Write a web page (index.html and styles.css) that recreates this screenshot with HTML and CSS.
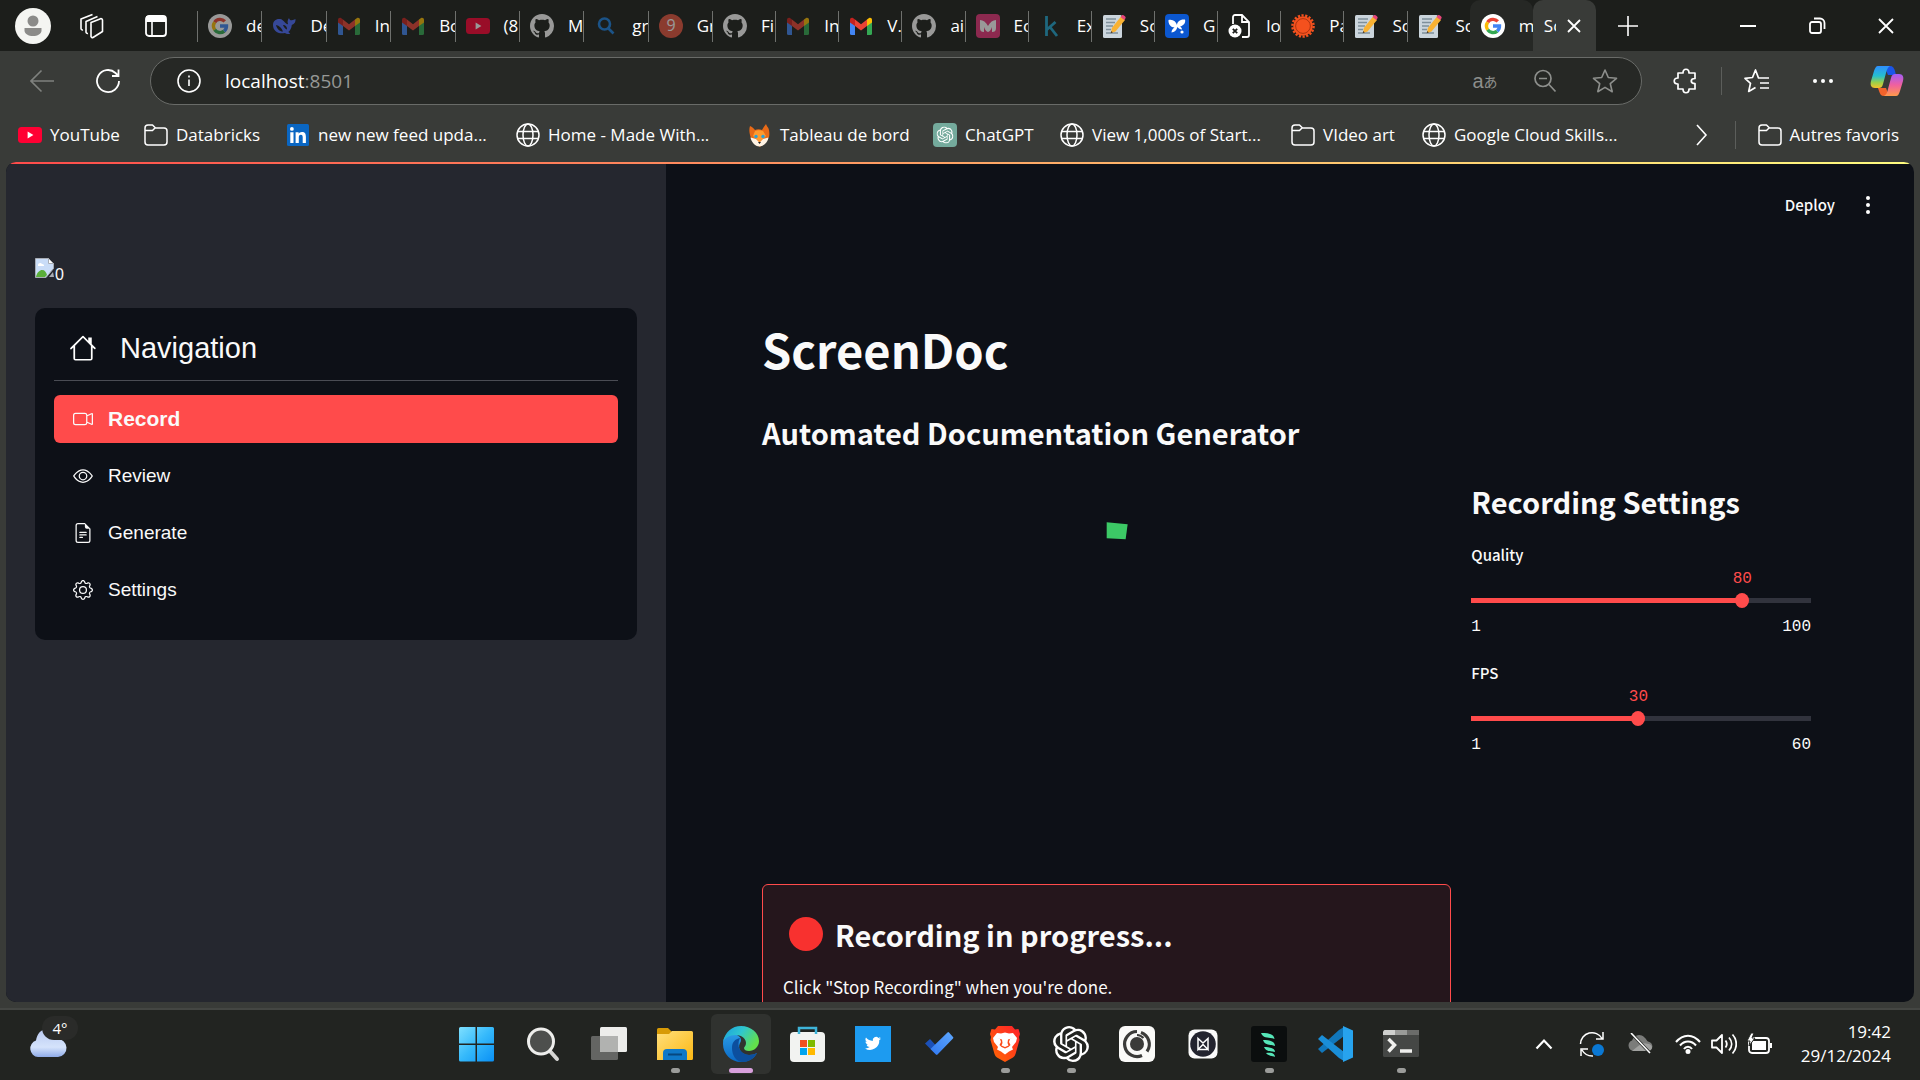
FILE: index.html
```html
<!DOCTYPE html>
<html lang="fr">
<head>
<meta charset="utf-8">
<title>ScreenDoc</title>
<link rel="stylesheet" href="styles.css">
</head>
<body>
<svg class="sprite" aria-hidden="true">
  <defs>
    <linearGradient id="gWin" x1="0" y1="0" x2="1" y2="1"><stop offset="0" stop-color="#7fe0ff"/><stop offset=".5" stop-color="#35b9fb"/><stop offset="1" stop-color="#0a90f5"/></linearGradient>
    <linearGradient id="gFolder" x1="0" y1="0" x2="1" y2="1"><stop offset="0" stop-color="#ffdf7c"/><stop offset="1" stop-color="#fcb813"/></linearGradient>
    <linearGradient id="gEdgeTop" x1="0" y1="0" x2="1" y2=".5"><stop offset="0" stop-color="#1a9fe0"/><stop offset=".5" stop-color="#2fc6cf"/><stop offset="1" stop-color="#63e04b"/></linearGradient>
    <linearGradient id="gEdge" x1="0" y1="0" x2="0" y2="1"><stop offset="0" stop-color="#2b9be6"/><stop offset="1" stop-color="#0a68c4"/></linearGradient>
    <linearGradient id="gCloud" x1="0" y1="0" x2="0" y2="1"><stop offset="0" stop-color="#b9c9f2"/><stop offset=".65" stop-color="#d5e3fb"/><stop offset="1" stop-color="#8fabe8"/></linearGradient>
    <linearGradient id="gBrave" x1="0" y1="1" x2="1" y2="0"><stop offset="0" stop-color="#ff6a00"/><stop offset="1" stop-color="#ff1f2b"/></linearGradient>
    <linearGradient id="gTick" x1="0" y1="1" x2="1" y2="0"><stop offset="0" stop-color="#3178f0"/><stop offset="1" stop-color="#5ea8ff"/></linearGradient>
    <linearGradient id="gCop1" x1="0" y1="0" x2="0" y2="1"><stop offset="0" stop-color="#2f8fff"/><stop offset=".45" stop-color="#25bfd0"/><stop offset=".75" stop-color="#9bd04a"/><stop offset="1" stop-color="#f5c22a"/></linearGradient>
    <linearGradient id="gCop2" x1="0" y1="0" x2="0" y2="1"><stop offset="0" stop-color="#a35cf5"/><stop offset=".5" stop-color="#f0609f"/><stop offset="1" stop-color="#ff9a4a"/></linearGradient>
  </defs>
  <symbol id="google" viewBox="0 0 24 24"><circle cx="12" cy="12" r="12" fill="#fff"/><g fill="none" stroke-width="3.4"><path d="M6.7 8.2A6.5 6.5 0 0 1 16.8 7.4" stroke="#ea4335"/><path d="M6.7 8.2a6.8 6.8 0 0 0 0 7.6" stroke="#fbbc05"/><path d="M6.7 15.8a6.5 6.5 0 0 0 9.5 1.3" stroke="#34a853"/><path d="M12 12h6.5a6.5 6.5 0 0 1-2.3 5.1" stroke="#4285f4"/></g></symbol>
  <symbol id="whale" viewBox="0 0 24 24"><path fill="#4d6bfe" d="M1 11c0-4 3-6.500 7-6 2 0 3.500 2 5 3.500 1.500 1.500 2.500 2 3 1.500-.8-2-.5-4 1-6 .4 1.800 1.500 2.500 2.800 2.300C21 6 22.500 5.500 23.500 5c.3 3-1 5-3.700 6-.3 3-1.500 5.500-3.500 7l2 1.600c-2 .9-4 .6-5.300-.6C6 20.500 1 17 1 11zm3 0c1 4 3.500 6.500 7 6.500C9.500 14 7.500 11.500 4 11zm7 0c1 2.500 2.500 4 4 4.500.3-2.500-1.500-4.500-4-4.500z"/></symbol>
  <symbol id="gmail" viewBox="0 0 24 24"><path fill="#4285f4" d="M1 7v12.500A1.500 1.500 0 0 0 2.500 21H6V10z"/><path fill="#34a853" d="M23 7v12.500a1.500 1.500 0 0 1-1.500 1.500H18V10z"/><path fill="#fbbc04" d="M18 5.500 20 4c1.300-.9 3 0 3 1.700V8.500L18 12z"/><path fill="#c5221f" d="M6 5.500 4 4C2.700 3.100 1 4 1 5.700v2.800L6 12z"/><path fill="#ea4335" d="m6 5.500 6 4.700 6-4.700V12l-6 4.600L6 12z"/></symbol>
  <symbol id="youtube" viewBox="0 0 24 24"><rect y="4" width="24" height="16" rx="3.500" fill="#ff0033"/><path d="m9.600 8.600 5.800 3.400-5.800 3.400z" fill="#fff"/></symbol>
  <symbol id="github" viewBox="0 0 16 16"><path fill="#fff" d="M8 0C3.580 0 0 3.580 0 8c0 3.540 2.290 6.530 5.470 7.590.4.070.55-.17.55-.38 0-.19-.01-.82-.01-1.490-2.010.37-2.530-.49-2.690-.94-.09-.23-.48-.94-.82-1.130-.28-.15-.68-.52-.01-.53.63-.01 1.080.58 1.230.82.72 1.210 1.870.87 2.330.66.070-.52.28-.87.51-1.070-1.780-.2-3.640-.89-3.640-3.950 0-.87.31-1.590.82-2.150-.08-.2-.36-1.020.08-2.120 0 0 .67-.21 2.200.82.64-.18 1.320-.27 2-.27s1.360.09 2 .27c1.530-1.040 2.200-.82 2.200-.82.44 1.100.16 1.920.08 2.120.51.56.82 1.270.82 2.150 0 3.070-1.870 3.750-3.650 3.950.29.25.54.73.54 1.480 0 1.070-.01 1.930-.01 2.200 0 .21.15.46.55.38A8.010 8.010 0 0 0 16 8c0-4.420-3.580-8-8-8z"/></symbol>
  <symbol id="loupe" viewBox="0 0 24 24"><g fill="none" stroke="#1b7fe0" stroke-width="2.600"><circle cx="10.500" cy="10" r="5.500"/><path d="m14.500 14.500 5 5"/></g></symbol>
  <symbol id="em" viewBox="0 0 24 24"><rect width="24" height="24" rx="4" fill="#e8337b"/><path fill="#fff" d="M4 6c3 0 6 2 8 6 2-4 5-6 8-6v8c0 3-1.500 4-4 4v-5c-1 3-2.500 4.500-4 5-1.500-.5-3-2-4-5v5c-2.500 0-4-1-4-4z"/></symbol>
  <symbol id="kay" viewBox="0 0 24 24"><path fill="none" stroke="#20a4cf" stroke-width="2.800" d="M7.500 2v20M16.500 8l-8.500 7.500M11 13l7 9"/></symbol>
  <symbol id="memo" viewBox="0 0 24 24"><rect x="1" y="1" width="19" height="23" rx="1.500" fill="#cbd5dc"/><path d="M4 5h10M4 8.500h9M4 12h7M4 15.500h5M4 19h12" stroke="#7f909b" stroke-width="1.400"/><path fill="#f9b233" d="m19 2.500 4 3.500-9.500 11.500L9 19l.8-5z"/><path fill="#e8457a" d="M20 1.200c1-1.200 4.500 1.500 3.500 3L22.300 6l-3.800-3z"/><path fill="#4a3b30" d="m9.300 17-.6 2.300 2.200-.8z"/></symbol>
  <symbol id="butterfly" viewBox="0 0 24 24"><rect width="24" height="24" rx="4" fill="#0b57d0"/><path fill="#fff" d="M12 11c0-3 3-6 8-5.500 1 3-1.500 6.500-5 7 1 .8 2 1.500 2 3-2 0-3.500-1-4.500-2.500-1 3-3 5.500-6 5.500 0-2 1-4 3-5C6 13.500 3 10 3.500 6 8 5 11 7.500 12 11z"/><circle cx="17" cy="18" r="1.600" fill="#fff"/></symbol>
  <symbol id="badfile" viewBox="0 0 24 24"><path fill="none" stroke="#fff" stroke-width="1.800" d="M5 10V3a2 2 0 0 1 2-2h7l7 7v13a2 2 0 0 1-2 2h-5M14 1v7h7"/><circle cx="7" cy="17" r="6.500" fill="#fff"/><path stroke="#1c1e1b" stroke-width="1.800" d="m4.800 14.800 4.400 4.400m0-4.400-4.400 4.400"/></symbol>
  <symbol id="sunburst" viewBox="0 0 24 24"><circle cx="12" cy="12" r="10.600" fill="none" stroke="#f4511e" stroke-width="2.400" stroke-dasharray="2.200 1.500"/><circle cx="12" cy="12" r="9.800" fill="#f4511e"/><circle cx="12" cy="12" r="7.400" fill="none" stroke="#9c2c0c" stroke-width=".8"/></symbol>
  <symbol id="folder" viewBox="0 0 24 24"><path fill="none" stroke="#fff" stroke-width="1.500" stroke-linejoin="round" d="M1 5a3 3 0 0 1 3-3h4.500l3 3H20a3 3 0 0 1 3 3v11a3 3 0 0 1-3 3H4a3 3 0 0 1-3-3zM1 7.500h7.500L11 5"/></symbol>
  <symbol id="linkedin" viewBox="0 0 24 24"><rect x="1" y="1" width="22" height="22" rx="1.500" fill="#0a66c2"/><path fill="#fff" d="M4.300 9.300h3.200V20H4.300zM5.900 4a1.900 1.900 0 1 1 0 3.800 1.900 1.900 0 0 1 0-3.800zM9.600 9.300h3v1.500c.6-1 1.700-1.800 3.300-1.800 3.200 0 4 2 4 4.900V20h-3.200v-5.500c0-1.400-.3-2.700-1.800-2.700-1.600 0-2.100 1.200-2.100 2.700V20H9.600z"/></symbol>
  <symbol id="globe" viewBox="0 0 24 24"><g fill="none" stroke="#fff" stroke-width="1.500"><circle cx="12" cy="12" r="11"/><ellipse cx="12" cy="12" rx="5" ry="11"/><path d="M2 8.500h20M2 15.500h20"/></g></symbol>
  <symbol id="fox" viewBox="0 0 24 24"><path fill="#e86a17" d="M2 3c2 1 4 2.500 5 4 2-1 5-1 7 0 1-2 2.500-4 4-6 .3 2 2.500 3 3 6 .5 3 .5 5 0 7l-9 10L3 15C1 10 1 6 2 3z"/><path fill="#ff9a2e" d="M7 8c2-1 6-1 8 0l3 5-6.500 6L5 13z"/><path fill="#fff3e4" d="M2.500 14.500 8 16l3.500 3.500L15 16l5.500-1.500c-.5 4-4.500 9-9 9s-8.500-5-9-9z"/><circle cx="8" cy="13.500" r="1.700" fill="#28a0d8"/><circle cx="15" cy="13.500" r="1.700" fill="#28a0d8"/><path d="M10 19h3l-1.500 2z" fill="#222"/></symbol>
  <symbol id="knot" viewBox="0 0 24 24"><path fill="currentColor" d="M22.280 9.820a5.980 5.980 0 0 0-.52-4.910 6.050 6.050 0 0 0-6.510-2.900A6.070 6.070 0 0 0 4.980 4.180a5.980 5.980 0 0 0-4 2.900 6.050 6.050 0 0 0 .74 7.100 5.980 5.980 0 0 0 .51 4.910 6.050 6.050 0 0 0 6.520 2.900A5.980 5.980 0 0 0 13.260 24a6.060 6.060 0 0 0 5.770-4.210 5.990 5.990 0 0 0 4-2.900 6.060 6.060 0 0 0-.75-7.070zm-9.020 12.610a4.480 4.480 0 0 1-2.880-1.040l.14-.08 4.780-2.760a.8.8 0 0 0 .39-.68v-6.740l2.020 1.170a.07.07 0 0 1 .04.050v5.580a4.500 4.500 0 0 1-4.490 4.500zM3.600 18.300a4.470 4.470 0 0 1-.54-3.010l.14.080 4.780 2.760a.77.77 0 0 0 .78 0l5.840-3.370v2.330a.08.08 0 0 1-.03.060L9.740 19.950a4.500 4.500 0 0 1-6.140-1.650zM2.340 7.900a4.490 4.490 0 0 1 2.370-1.970V11.600a.77.77 0 0 0 .39.680l5.810 3.350-2.020 1.170a.08.08 0 0 1-.07 0l-4.830-2.790A4.500 4.500 0 0 1 2.340 7.870zm16.600 3.860L13.100 8.360 15.120 7.200a.08.08 0 0 1 .07 0l4.830 2.790a4.490 4.490 0 0 1-.68 8.100v-5.680a.79.79 0 0 0-.4-.65zm2.010-3.030-.14-.08-4.780-2.780a.78.78 0 0 0-.78 0L9.410 9.230V6.900a.07.07 0 0 1 .03-.06l4.830-2.790a4.500 4.500 0 0 1 6.680 4.660zM8.310 12.860l-2.020-1.160a.08.08 0 0 1-.04-.06V6.070a4.500 4.500 0 0 1 7.380-3.450l-.14.080-4.780 2.760a.8.8 0 0 0-.4.680zm1.090-2.370 2.610-1.500 2.610 1.500v3l-2.600 1.500-2.610-1.500z"/></symbol>
</svg>

<header class="browser">
  <div class="tabstrip">
    <div class="strip-tools">
      <button class="icon-btn" aria-label="Profil"><svg width="36" height="36" viewBox="0 0 36 36"><circle cx="18" cy="18" r="18" fill="#f4f5f2"/><circle cx="18" cy="13" r="5.500" fill="#8b8b89"/><path fill="#8b8b89" d="M9.500 20h17v2.500c0 3.500-4 5.500-8.500 5.500s-8.500-2-8.500-5.500z"/></svg></button>
      <button class="icon-btn" aria-label="Espaces de travail"><svg width="26" height="26" viewBox="0 0 26 26" fill="none" stroke="#fff" stroke-width="1.600" stroke-linejoin="round"><path d="m12 9.500 9-3.500a1.500 1.500 0 0 1 2.500 1v11.500L14 24.500a1.500 1.500 0 0 1-2-1z"/><path d="M9 20.500a1.600 1.600 0 0 1-2-1.500V8.500L18.500 3.500"/><path d="M4 17a1.600 1.600 0 0 1-2-1.500V6L13.500 1.500"/></svg></button>
      <button class="icon-btn" aria-label="Onglets verticaux"><svg width="24" height="24" viewBox="0 0 24 24"><rect x="2" y="2" width="20" height="20" rx="3" fill="none" stroke="#fff" stroke-width="1.800"/><path fill="#fff" d="M2 2h20v6H2z"/><path stroke="#fff" stroke-width="1.600" d="M8 8v13"/></svg></button>
    </div>
    <div class="tabs">
      <a class="tab dim" href="#"><svg><use href="#google"/></svg><span>de</span></a>
      <a class="tab dim" href="#"><svg><use href="#whale"/></svg><span>De</span></a>
      <a class="tab dim" href="#"><svg><use href="#gmail"/></svg><span>In</span></a>
      <a class="tab dim" href="#"><svg><use href="#gmail"/></svg><span>Bo</span></a>
      <a class="tab dim" href="#"><svg><use href="#youtube"/></svg><span>(8</span></a>
      <a class="tab dim" href="#"><svg><use href="#github"/></svg><span>M</span></a>
      <a class="tab dim" href="#"><svg><use href="#loupe"/></svg><span>gr</span></a>
      <a class="tab dim" href="#"><svg viewBox="0 0 24 24"><circle cx="12" cy="12" r="12" fill="#e5533f"/><text x="12" y="17" text-anchor="middle" font-size="16" fill="#fff">9</text></svg><span>Gr</span></a>
      <a class="tab dim" href="#"><svg><use href="#github"/></svg><span>Fi</span></a>
      <a class="tab dim" href="#"><svg><use href="#gmail"/></svg><span>In</span></a>
      <a class="tab" href="#"><svg><use href="#gmail"/></svg><span>V.</span></a>
      <a class="tab dim" href="#"><svg><use href="#github"/></svg><span>ai</span></a>
      <a class="tab dim" href="#"><svg><use href="#em"/></svg><span>Ec</span></a>
      <a class="tab dim" href="#"><svg><use href="#kay"/></svg><span>Ex</span></a>
      <a class="tab" href="#"><svg><use href="#memo"/></svg><span>Sc</span></a>
      <a class="tab" href="#"><svg><use href="#butterfly"/></svg><span>G</span></a>
      <a class="tab" href="#"><svg><use href="#badfile"/></svg><span>lo</span></a>
      <a class="tab" href="#"><svg><use href="#sunburst"/></svg><span>Pa</span></a>
      <a class="tab" href="#"><svg><use href="#memo"/></svg><span>Sc</span></a>
      <a class="tab" href="#"><svg><use href="#memo"/></svg><span>Sc</span></a>
      <a class="tab hover" href="#"><svg><use href="#google"/></svg><span>m</span></a>
      <div class="tab active"><span>Sc</span><button class="icon-btn" aria-label="Fermer l'onglet"><svg viewBox="0 0 24 24" stroke="#fff" stroke-width="1.800"><path d="m6 6 12 12M18 6 6 18"/></svg></button></div>
    </div>
    <button class="icon-btn new-tab" aria-label="Nouvel onglet"><svg width="24" height="24" viewBox="0 0 24 24" stroke="#fff" stroke-width="1.600"><path d="M2 12h20M12 2v20"/></svg></button>
    <div class="window-controls">
      <button class="icon-btn" aria-label="Réduire"><svg width="18" height="18" viewBox="0 0 18 18" stroke="#fff" stroke-width="2"><path d="M1 9h16"/></svg></button>
      <button class="icon-btn" aria-label="Restaurer"><svg width="18" height="18" viewBox="0 0 18 18" fill="none" stroke="#fff" stroke-width="1.800"><rect x="2" y="5" width="11" height="11" rx="2"/><path d="M6 1.500h6a4.500 4.500 0 0 1 4.500 4.500v6"/></svg></button>
      <button class="icon-btn" aria-label="Fermer"><svg width="18" height="18" viewBox="0 0 18 18" stroke="#fff" stroke-width="1.800"><path d="m2 2 14 14M16 2 2 16"/></svg></button>
    </div>
  </div>

  <div class="toolbar">
    <button class="icon-btn nav-btn" aria-label="Précédent"><svg width="24" height="24" viewBox="0 0 24 24" fill="none" stroke="#7f817e" stroke-width="1.600"><path d="M24 12H1M11.500 1.500 1 12l10.500 10.500"/></svg></button>
    <button class="icon-btn nav-btn" aria-label="Actualiser"><svg width="26" height="26" viewBox="0 0 26 26" fill="none" stroke="#fff" stroke-width="1.800"><path d="M24 13a11 11 0 1 1-3.500-8L23 7.500M23.500 1.500v6.500H17"/></svg></button>
    <div class="address">
      <svg width="24" height="24" viewBox="0 0 24 24" fill="none" stroke="#fff" stroke-width="1.600"><circle cx="12" cy="12" r="11"/><path d="M12 10.500V17M12 6.500v2"/></svg>
      <a class="url" href="#"><b>localhost</b>:8501</a>
      <button class="icon-btn translate" aria-label="Traduire"><span>a</span><span class="kana">あ</span></button>
      <button class="icon-btn" aria-label="Zoom arrière"><svg width="24" height="24" viewBox="0 0 24 24" fill="none" stroke="#8d8f8c" stroke-width="1.700"><circle cx="10" cy="9.500" r="8"/><path d="m16 15.500 6.500 7M6 9.500h8"/></svg></button>
      <button class="icon-btn" aria-label="Ajouter aux favoris"><svg width="26" height="26" viewBox="0 0 26 26" fill="none" stroke="#8d8f8c" stroke-width="1.600" stroke-linejoin="round"><path d="m13 2 3.300 7.500 8.200.8-6.200 5.400 1.900 8L13 19.400l-7.200 4.300 1.900-8-6.200-5.400 8.200-.8z"/></svg></button>
    </div>
    <div class="toolbar-end">
      <button class="icon-btn" aria-label="Extensions"><svg width="26" height="26" viewBox="0 0 26 26" fill="none" stroke="#fff" stroke-width="1.700" stroke-linejoin="round"><path d="M5 5h5c0-5 6-5 6 0h6v5.500c-5 0-5 5 0 5V21h-6c0 5-6 5-6 0H5v-5c-5 0-5-6 0-6z"/></svg></button>
      <i class="rule"></i>
      <button class="icon-btn" aria-label="Favoris"><svg width="26" height="26" viewBox="0 0 26 26" fill="none" stroke="#fff" stroke-width="1.700" stroke-linejoin="round"><path d="M17 10h-2.500L11.500 2 8.500 9.500l-7.500.8 5.500 5-1.800 8.200 6.800-4M16 10h9M16 15h9M16 20h9"/></svg></button>
      <button class="icon-btn more" aria-label="Paramètres et plus"><svg width="22" height="22" viewBox="0 0 22 22" fill="#fff"><circle cx="3" cy="11" r="2"/><circle cx="11" cy="11" r="2"/><circle cx="19" cy="11" r="2"/></svg></button>
      <button class="icon-btn copilot" aria-label="Copilot"><svg width="34" height="32" viewBox="0 0 34 32"><path fill="#1b55e8" d="M14 1h6c3 0 4 2 5 5l1 4h-8z"/><path fill="url(#gCop1)" d="M8 1h12c-2 1-3 3-4 7l-3 11c-.8 3-2 4-4 4H5c-4 0-5-3-4-7L4 6c1-3 2-5 4-5z"/><path fill="#f2632b" d="M8 23h8l3 8h-5c-3 0-4-2-5-5z"/><path fill="url(#gCop2)" d="M26 31H14c2-1 3-3 4-7l3-11c.8-3 2-4 4-4h4c4 0 5 3 4 7l-3 10c-1 3-2 5-4 5z"/></svg></button>
    </div>
  </div>

  <nav class="bookmarks" aria-label="Favoris">
    <a class="bm" href="#"><svg><use href="#youtube"/></svg><span>YouTube</span></a>
    <a class="bm" href="#"><svg><use href="#folder"/></svg><span>Databricks</span></a>
    <a class="bm" href="#"><svg><use href="#linkedin"/></svg><span>new new feed upda...</span></a>
    <a class="bm" href="#"><svg><use href="#globe"/></svg><span>Home - Made With...</span></a>
    <a class="bm" href="#"><svg><use href="#fox"/></svg><span>Tableau de bord</span></a>
    <a class="bm" href="#"><svg class="gpt" viewBox="-5 -5 34 34"><use href="#knot" width="24" height="24"/></svg><span>ChatGPT</span></a>
    <a class="bm" href="#"><svg><use href="#globe"/></svg><span>View 1,000s of Start...</span></a>
    <a class="bm" href="#"><svg><use href="#folder"/></svg><span>VIdeo art</span></a>
    <a class="bm" href="#"><svg><use href="#globe"/></svg><span>Google Cloud Skills...</span></a>
    <div class="bm-end">
      <button class="icon-btn" aria-label="Plus de favoris"><svg width="24" height="24" viewBox="0 0 24 24" fill="none" stroke="#fff" stroke-width="1.600"><path d="m8 2 9 10-9 10"/></svg></button>
      <i class="rule"></i>
      <a class="bm" href="#"><svg><use href="#folder"/></svg><span>Autres favoris</span></a>
    </div>
  </nav>
</header>

<div class="viewport">
  <div class="page">
    <aside class="sidebar">
      <div class="logo">
        <svg width="20" height="20" viewBox="0 0 20 20" role="img" aria-label="0"><path fill="#c9dcf7" stroke="#a8adb5" d="M.5.500h13l5 5v5L11 19.500H.500z"/><path fill="#fff" stroke="#a8adb5" d="M13.500.500v5h5z"/><path fill="#5aae3a" d="M1 19c1-5 4-7 6-7 3 0 4 2 5 5l-2 2z"/><path fill="#fff" d="M3 7c0-2 3-3 4-1 2 0 2 1 2 2H3z"/><path fill="#a8adb5" d="m18 14 1 5h-5z"/></svg>
        <span>0</span>
      </div>
      <nav class="menu">
        <h2 class="menu-title"><svg width="28" height="28" viewBox="0 0 16 16" fill="#fff"><path d="M8.350 1.150a.5.500 0 0 0-.7 0L.850 7.900a.5.500 0 1 0 .7.700L2.500 7.700v6.300A1.200 1.200 0 0 0 3.700 15.200h8.600a1.200 1.200 0 0 0 1.200-1.200V7.700l.95.900a.5.500 0 0 0 .7-.7L13 5.750V2h-2v1.800zM12.500 6.700V14a.3.300 0 0 1-.3.300H3.800a.3.300 0 0 1-.3-.3V6.700L8 2.200z"/></svg><span>Navigation</span></h2>
        <ul>
          <li><a class="selected" href="#"><svg viewBox="0 0 16 16" fill="currentColor"><path fill-rule="evenodd" d="M0 5a2 2 0 0 1 2-2h7.500a2 2 0 0 1 1.980 1.730l3.110-1.380A1 1 0 0 1 16 4.270v7.460a1 1 0 0 1-1.410.91l-3.110-1.380A2 2 0 0 1 9.500 13H2a2 2 0 0 1-2-2zm11.500 5.180 3.500 1.550V4.270l-3.500 1.550zM2 4a1 1 0 0 0-1 1v6a1 1 0 0 0 1 1h7.500a1 1 0 0 0 1-1V5a1 1 0 0 0-1-1z"/></svg>Record</a></li>
          <li><a href="#"><svg viewBox="0 0 16 16" fill="currentColor"><path d="M16 8s-3-5.500-8-5.500S0 8 0 8s3 5.500 8 5.500S16 8 16 8M1.170 8a13 13 0 0 1 1.660-2.040C4.120 4.670 5.880 3.500 8 3.500s3.880 1.170 5.170 2.460A13 13 0 0 1 14.830 8a13 13 0 0 1-1.660 2.040C11.880 11.330 10.120 12.500 8 12.500s-3.880-1.170-5.170-2.460A13 13 0 0 1 1.170 8"/><path d="M8 5.500a2.500 2.500 0 1 0 0 5 2.500 2.500 0 0 0 0-5M4.500 8a3.500 3.500 0 1 1 7 0 3.500 3.500 0 0 1-7 0"/></svg>Review</a></li>
          <li><a href="#"><svg viewBox="0 0 16 16" fill="currentColor"><path d="M5.500 7a.5.500 0 0 0 0 1h5a.5.500 0 0 0 0-1zM5 9.500a.5.500 0 0 1 .5-.5h5a.5.500 0 0 1 0 1h-5a.5.500 0 0 1-.5-.5m0 2a.5.500 0 0 1 .5-.5h2a.5.500 0 0 1 0 1h-2a.5.500 0 0 1-.5-.5"/><path d="M9.500 0H4a2 2 0 0 0-2 2v12a2 2 0 0 0 2 2h8a2 2 0 0 0 2-2V4.500zm0 1v2A1.500 1.500 0 0 0 11 4.500h2V14a1 1 0 0 1-1 1H4a1 1 0 0 1-1-1V2a1 1 0 0 1 1-1z"/></svg>Generate</a></li>
          <li><a href="#"><svg viewBox="0 0 16 16" fill="currentColor"><path d="M8 4.754a3.246 3.246 0 1 0 0 6.492 3.246 3.246 0 0 0 0-6.492M5.754 8a2.246 2.246 0 1 1 4.492 0 2.246 2.246 0 0 1-4.492 0"/><path d="M9.796 1.343c-.527-1.790-3.065-1.790-3.592 0l-.094.319a.873.873 0 0 1-1.255.52l-.292-.16c-1.640-.892-3.433.902-2.540 2.541l.159.292a.873.873 0 0 1-.52 1.255l-.319.094c-1.790.527-1.790 3.065 0 3.592l.319.094a.873.873 0 0 1 .52 1.255l-.16.292c-.892 1.640.901 3.434 2.541 2.540l.292-.159a.873.873 0 0 1 1.255.52l.094.319c.527 1.790 3.065 1.790 3.592 0l.094-.319a.873.873 0 0 1 1.255-.52l.292.16c1.640.893 3.434-.902 2.540-2.541l-.159-.292a.873.873 0 0 1 .52-1.255l.319-.094c1.790-.527 1.790-3.065 0-3.592l-.319-.094a.873.873 0 0 1-.52-1.255l.16-.292c.893-1.640-.902-3.433-2.541-2.540l-.292.159a.873.873 0 0 1-1.255-.52zm-2.633.283c.246-.835 1.428-.835 1.674 0l.094.319a1.873 1.873 0 0 0 2.693 1.115l.291-.16c.764-.415 1.600.42 1.184 1.185l-.159.292a1.873 1.873 0 0 0 1.116 2.692l.318.094c.835.246.835 1.428 0 1.674l-.319.094a1.873 1.873 0 0 0-1.115 2.693l.16.291c.415.764-.42 1.600-1.185 1.184l-.291-.159a1.873 1.873 0 0 0-2.693 1.116l-.094.318c-.246.835-1.428.835-1.674 0l-.094-.319a1.873 1.873 0 0 0-2.692-1.115l-.292.16c-.764.415-1.600-.42-1.184-1.185l.159-.291A1.873 1.873 0 0 0 1.945 8.930l-.319-.094c-.835-.246-.835-1.428 0-1.674l.319-.094A1.873 1.873 0 0 0 3.060 4.377l-.16-.292c-.415-.764.42-1.600 1.185-1.184l.292.159a1.873 1.873 0 0 0 2.692-1.115z"/></svg>Settings</a></li>
        </ul>
      </nav>
    </aside>

    <main class="main">
      <div class="app-bar">
        <button class="deploy">Deploy</button>
        <button class="icon-btn" aria-label="Menu"><svg width="20" height="20" viewBox="0 0 20 20" fill="#fff"><circle cx="10" cy="3" r="2"/><circle cx="10" cy="10" r="2"/><circle cx="10" cy="17" r="2"/></svg></button>
      </div>
      <div class="content">
        <h1>ScreenDoc</h1>
        <h3 class="subtitle">Automated Documentation Generator</h3>
        <div class="columns">
          <section class="stage">
            <svg class="animation" viewBox="0 0 690 404" aria-hidden="true"><path fill="#3cc966" d="m345 42 21 2-2 15-19-1z"/></svg>
            <div class="notice">
              <h3><i class="dot"></i>Recording in progress...</h3>
              <p>Click "Stop Recording" when you're done.</p>
            </div>
          </section>
          <section class="settings">
            <h3>Recording Settings</h3>
            <div class="slider" style="--pos: 79.8%">
              <label for="quality">Quality</label>
              <div class="value-row"><output for="quality">80</output></div>
              <input id="quality" type="range" min="1" max="100" value="80">
              <div class="bounds"><span>1</span><span>100</span></div>
            </div>
            <div class="slider" style="--pos: 49.2%">
              <label for="fps">FPS</label>
              <div class="value-row"><output for="fps">30</output></div>
              <input id="fps" type="range" min="1" max="60" value="30">
              <div class="bounds"><span>1</span><span>60</span></div>
            </div>
          </section>
        </div>
      </div>
    </main>
  </div>
</div>

<footer class="taskbar">
  <div class="weather">
    <svg width="38" height="30" viewBox="0 0 38 30"><path fill="url(#gCloud)" d="M9 29a8.500 8.500 0 0 1-2-16.500C8 6 12 1 18 1c5 0 9 4 10 10a9 9 0 0 1 1 18z"/></svg>
    <span class="temp">4°</span>
  </div>
  <div class="apps">
    <button class="app" aria-label="Démarrer"><svg viewBox="0 0 36 36" fill="url(#gWin)"><path d="M0 2.500A1.500 1.500 0 0 1 1.500 1H16.500v16.500H0zM18 1H33.500a1.500 1.500 0 0 1 1.500 1.500v15H18zM0 19h16.500v16.500H1.500A1.500 1.500 0 0 1 0 34zM18 19h17v15a1.500 1.500 0 0 1-1.500 1.500H18z"/></svg></button>
    <button class="app" aria-label="Rechercher"><svg viewBox="0 0 36 36"><path stroke="#d6d6d4" stroke-width="4" stroke-linecap="round" d="m24 24 8 9"/><circle cx="16" cy="15.500" r="12.500" fill="#4d4f4d" stroke="#eeeeec" stroke-width="3"/></svg></button>
    <button class="app" aria-label="Vue des tâches"><svg viewBox="0 0 36 36"><rect x="0" y="10" width="27" height="24" rx="1.500" fill="#646563"/><rect x="9" y="1" width="27" height="25" rx="1.500" fill="#ededeb"/><path fill="#b1b2b0" d="M9 10h18v16H10.500A1.500 1.500 0 0 1 9 24.500z"/></svg></button>
    <button class="app running" aria-label="Explorateur de fichiers"><svg viewBox="0 0 36 36"><path fill="#d79a06" d="M0 3.500A1.500 1.500 0 0 1 1.500 2H11l4 4-3 5H0z"/><path fill="url(#gFolder)" d="M0 8h12l3-3h19.500A1.500 1.500 0 0 1 36 6.500v26a1.500 1.500 0 0 1-1.500 1.500H0z"/><path fill="#0f78c8" d="M6 34V27a4 4 0 0 1 4-4h16a4 4 0 0 1 4 4v7z"/><path stroke="#07477f" stroke-width="2" d="M11 28.500h14"/></svg></button>
    <button class="app current" aria-label="Microsoft Edge"><svg viewBox="0 0 36 36"><path fill="url(#gEdge)" d="M0 18C0 8 8 6 14 9c4 2 5 5 3 8-3 6 2 12 9 12 3 0 6-1 8-2-3 6-9 9-16 9C8 36 0 28 0 18z"/><path fill="#0c4f9e" d="M9 22c0-6 3-9 8-10-4 8 0 16 9 17 3 0 6-1 8-2-3 6-9 9-14 9C13 36 9 29 9 22z"/><path fill="url(#gEdgeTop)" d="M0 16C2 6 9 0 18 0c10 0 18 7 18 15 0 6-5 10-10 10-3 0-5-1-5-3 0-1 2-2 2-5 0-4-4-8-10-8-7 0-11 3-13 7z"/></svg></button>
    <button class="app" aria-label="Microsoft Store"><svg viewBox="0 0 36 36"><rect x="1" y="6" width="35" height="30" rx="4" fill="#f2f3f1"/><path fill="none" stroke="#3eb4d9" stroke-width="2.500" d="M10 8V2h17v6"/><path fill="#f25022" d="M11 14h7v7h-7z"/><path fill="#7fba00" d="M19 14h7v7h-7z"/><path fill="#00a4ef" d="M11 22h7v7h-7z"/><path fill="#ffb900" d="M19 22h7v7h-7z"/></svg></button>
    <button class="app" aria-label="Twitter"><svg viewBox="0 0 36 36"><path fill="#1d9bf0" d="M0 0h36v36H0z"/><path fill="#fff" d="M26 12.400a6.500 6.500 0 0 1-1.900.5c.7-.4 1.200-1 1.400-1.800-.6.400-1.300.6-2.100.8a3.300 3.300 0 0 0-5.600 3A9.300 9.300 0 0 1 11 11.500a3.300 3.300 0 0 0 1 4.400c-.5 0-1-.2-1.500-.4 0 1.600 1.100 2.900 2.600 3.200-.5.100-1 .1-1.500 0 .4 1.300 1.600 2.300 3.100 2.300A6.600 6.600 0 0 1 10 22.400a9.300 9.300 0 0 0 14.300-8.300c.7-.5 1.200-1 1.700-1.700z"/></svg></button>
    <button class="app" aria-label="To Do"><svg viewBox="0 0 36 36"><path fill="#1b50b8" d="m4 17.500 5-4.500 6 6.500v9z"/><path fill="url(#gTick)" d="M9.500 23 26.500 6.500a1 1 0 0 1 1.500 0l4 4.500a1 1 0 0 1 0 1.500L16.500 28.500a1 1 0 0 1-1.500 0z"/></svg></button>
    <button class="app running" aria-label="Brave"><svg viewBox="0 0 36 36"><path fill="url(#gBrave)" d="M11 0h14l3 3.500 3.500-.5 1.500 5-1 3 .5 3-4 14a6 6 0 0 1-2.500 3.500L18 36l-8-4.500A6 6 0 0 1 7.500 28l-4-14 .5-3-1-3L4.500 3 8 3.500z"/><path fill="#fff" d="m10 7 4 .5 4-1 4 1 4-.5 4 5-1 4-4 5 1 2.500-4 2-4 3-4-3-4-2L11 21l-4-5-1-4z"/><path fill="#fb4a19" d="m10 12 5 1.500.5 3.500-1 2.500L18 21l3.500-1.500-1-2.500.5-3.500 5-1.500-3 1-1 3 1.500 3-2 2-3.500 1.500-3.500-1.500-2-2 1.500-3-1-3z"/></svg></button>
    <button class="app running" aria-label="ChatGPT"><svg class="white" viewBox="0 0 24 24"><use href="#knot"/></svg></button>
    <button class="app" aria-label="Enregistreur"><svg viewBox="0 0 36 36"><rect width="36" height="36" rx="6" fill="#fafaf8"/><g fill="none" stroke="#3b3b39" stroke-width="3.200"><path d="M23 29.500A12.500 12.500 0 1 1 18 5.500"/><path d="M22 6.500a12.500 12.500 0 0 1 6 19"/><path d="M18 9a9 9 0 0 1 6.500 3" stroke-width="2"/></g><circle cx="18" cy="18" r="7" fill="#3b3b39"/></svg></button>
    <button class="app" aria-label="Monica"><svg viewBox="0 0 36 36"><rect x="3.500" y="3.500" width="29" height="29" rx="6" fill="#fbfbfb"/><circle cx="18" cy="18" r="12.800" fill="#23242f"/><path fill="none" stroke="#fff" stroke-width="1.500" d="M13 23.500v-11l5 4.500 5-4.500v11l-5-5z M13 23.500h10"/></svg></button>
    <button class="app running" aria-label="Windsurf"><svg viewBox="0 0 36 36"><rect width="36" height="36" rx="3" fill="#0b0e0e"/><path fill="#56e6b8" d="M10 7c8 0 13 1 13.500 6C19 11 12 13 10 7zM12 14c6 0 12 1 12 6-5-2-10 0-12-6zM13 21c5 0 11 1 11 5-4-1-9 0-11-5zM15 27c5-1 9 0 9 4-2-1-7-1-9-4z"/></svg></button>
    <button class="app" aria-label="Visual Studio Code"><svg viewBox="0 0 36 36"><path fill="#1177bb" d="M1 23 22 4l5-3v9L5 27z"/><path fill="#1a8ed8" d="m1 13 4-4 22 17v9l-5-3z"/><path fill="#27a3ee" d="m26 0 10 4.500v27L26 36z"/></svg></button>
    <button class="app running" aria-label="Terminal"><svg viewBox="0 0 36 36"><rect y="4" width="36" height="27" rx="1.500" fill="#454745"/><path fill="#cfd0ce" d="M1.500 4H12v5H0V5.500z"/><path fill="#9a9b99" d="M12 4h12v5H12z"/><path fill="#6b6c6a" d="M24 4h12v5H24z"/><path fill="none" stroke="#f0f0ee" stroke-width="3.500" d="m5.500 13 6 6-6 6.500"/><path stroke="#f0f0ee" stroke-width="3.500" d="M17 25h12"/></svg></button>
  </div>
  <div class="tray">
    <button class="icon-btn chev" aria-label="Icônes masquées"><svg width="18" height="12" viewBox="0 0 18 12" fill="none" stroke="#fff" stroke-width="2.200"><path d="m1.500 10.500 7.500-8 7.500 8"/></svg></button>
    <svg width="26" height="26" viewBox="0 0 26 26" fill="none" stroke="#fff" stroke-width="1.500"><path d="M1.500 13A11.500 11.500 0 0 1 23 7.500M24 1v7h-7M14 25A12 12 0 0 1 3 19M2 25v-7h7"/><circle cx="19" cy="19" r="6" fill="#0a78d4" stroke="none"/></svg>
    <svg width="26" height="22" viewBox="0 0 26 22"><path fill="#7b7c7a" d="M6 18a5.500 5.500 0 0 1-1-10.500C7 2 13 0 17.500 4.500 20 7 20 8 21 8.500c6 1 6 9.500-1 9.500z"/><path fill="#a0a19f" d="M5 18 15 10l7 1c5 2 3 7-1 7z"/><path stroke="#222421" stroke-width="3" d="m4 0 19 20"/><path stroke="#fff" stroke-width="1.600" d="m4 0 19 20"/></svg>
    <div class="status">
      <svg width="26" height="22" viewBox="0 0 26 22" fill="none" stroke="#fff" stroke-width="2"><path d="M1 9c7-8.500 17-8.500 24 0M5 12.500c4.500-5.500 11.500-5.500 16 0M9 16c2-3 6-3 8 0"/><circle cx="13" cy="18.500" r="1.500" fill="#fff"/></svg>
      <svg width="26" height="22" viewBox="0 0 26 22" fill="none" stroke="#fff" stroke-width="1.800" stroke-linejoin="round"><path d="M1 7.500h4.500L11 2v18l-5.500-5.500H1zM14.500 7.500c1.500 2 1.500 5 0 7M18 4.500c3.500 4 3.500 9 0 13M21.500 1.500c5 5.500 5 13.500 0 19"/></svg>
      <svg width="26" height="22" viewBox="0 0 26 22"><rect x="2" y="5" width="20" height="15" rx="3" fill="none" stroke="#fff" stroke-width="1.800"/><rect x="5" y="8" width="14" height="9" fill="#fff"/><path fill="#fff" d="M23 10h2v5h-2z"/><path fill="#fff" stroke="#222421" d="M4 0 0 8h3l-1 5 6-8H5l2-5z"/></svg>
    </div>
    <div class="clock"><time>19:42</time><time>29/12/2024</time></div>
  </div>
</footer>
</body>
</html>
```
FILE: styles.css
```css
* { box-sizing: border-box; }

body {
  margin: 0;
  height: 100vh;
  display: flex;
  flex-direction: column;
  overflow: hidden;
  background: #393b38;
  color: #fff;
  font: 17px/24px "Open Sans", "Noto Sans", sans-serif;
}

h1, h2, h3, p, ul { margin: 0; padding: 0; }
ul { list-style: none; }
a { color: inherit; text-decoration: none; }
svg { display: block; flex: none; }
.sprite { position: absolute; width: 0; height: 0; }

.icon-btn {
  display: flex;
  align-items: center;
  justify-content: center;
  padding: 0;
  border: 0;
  background: none;
  color: inherit;
}

.rule { width: 1px; height: 28px; background: #5c5e5b; }

/* Tab strip */
.tabstrip {
  display: flex;
  height: 51px;
  background: #1c1e1b;
}
.strip-tools {
  display: flex;
  align-items: center;
  gap: 28px;
  width: 197px;
  padding-left: 15px;
}
.strip-tools .icon-btn:last-child { margin-left: 11px; }
.tabs {
  display: flex;
  flex: 0 1 1399px;
  min-width: 0;
}
.tab {
  display: flex;
  align-items: center;
  flex: 42 1 0;
  min-width: 0;
  gap: 14px;
  padding-left: 10px;
  overflow: hidden;
  white-space: nowrap;
  border-left: 1px solid transparent;
  border-image: linear-gradient(transparent 12px, #6e706d 12px, #6e706d 41px, transparent 41px) 1;
}
.tab:nth-child(-n+8) { flex-grow: 43; }
.tab svg { width: 24px; height: 24px; }
.tab.dim svg { opacity: .55; }
.tab.hover { background: #262825; border-image: none; border-radius: 10px 10px 0 0; }
.tab.active { background: #393b38; border-image: none; border-radius: 10px 10px 0 0; gap: 6px; }
.tab.active span { width: 12px; overflow: hidden; }
.new-tab { width: 64px; }
.window-controls {
  display: flex;
  margin-left: auto;
}
.window-controls .icon-btn { width: 69px; }

/* Toolbar */
.toolbar {
  display: flex;
  align-items: center;
  height: 60px;
  padding-left: 9px;
}
.nav-btn { width: 66px; height: 48px; }
.nav-btn + .address { margin-left: 9px; }
.address {
  display: flex;
  align-items: center;
  flex: 1;
  gap: 24px;
  height: 48px;
  padding: 0 18px 0 26px;
  border: 1px solid #696b68;
  border-radius: 24px;
  background: #262825;
}
.url { flex: 1; color: #969895; font-size: 19px; }
.url b { color: #fff; font-weight: 400; }
.address .icon-btn { width: 36px; }
.translate { color: #8d8f8c; font-size: 20px; }
.kana { font: 14px/24px "Noto Sans CJK JP", sans-serif; }
.toolbar-end {
  display: flex;
  align-items: center;
  gap: 22px;
  width: 278px;
  padding: 0 16px 0 31px;
}
.more { margin-left: 20px; }
.copilot { margin-left: auto; }

/* Bookmarks */
.bookmarks {
  display: grid;
  grid-template-columns: 126px 142px 230px 232px 185px 127px 231px 131px auto 1fr;
  align-items: center;
  height: 51px;
  padding: 0 21px 4px 18px;
  white-space: nowrap;
}
.bm { display: flex; align-items: center; gap: 8px; }
.bm svg { width: 24px; height: 24px; }
.bm .gpt { border-radius: 4px; background: #74aa9c; color: #fff; }
.bm-end {
  display: flex;
  align-items: center;
  justify-content: flex-end;
  gap: 22px;
}

/* Web page */
.viewport {
  display: flex;
  flex: 1 1 0;
  min-height: 0;
  padding: 0 6px 6px;
}
.page {
  position: relative;
  display: flex;
  flex: 1;
  min-width: 0;
  overflow: hidden;
  border-radius: 10px;
  background: #0d1017;
  color: #fafafa;
  font-family: "Noto Sans CJK JP", "Noto Sans", sans-serif;
}
.page::before {
  content: "";
  position: absolute;
  inset: 0 0 auto;
  height: 2px;
  background: linear-gradient(90deg, #ff4b4b, #fffd80);
}
.sidebar {
  width: 660px;
  padding: 96px 29px 0;
  background: #25272f;
  font-family: "Liberation Sans", sans-serif;
}
.logo { display: flex; align-items: flex-start; height: 50px; }
.logo span { padding-top: 5px; font-size: 16px; }
.menu {
  height: 332px;
  padding: 20px 19px;
  border-radius: 10px;
  background: #0d1017;
}
.menu-title {
  display: flex;
  align-items: center;
  gap: 23px;
  height: 53px;
  margin-bottom: 14px;
  padding: 0 15px 12px;
  border-bottom: 1px solid #4a4c54;
  font-size: 29px;
  line-height: 40px;
  font-weight: 400;
}
.menu ul { display: grid; gap: 9px; }
.menu a {
  display: flex;
  align-items: center;
  gap: 15px;
  height: 48px;
  padding: 0 19px;
  border-radius: 6px;
  font-size: 19px;
}
.menu a svg { width: 20px; height: 20px; }
.menu a.selected { background: #ff4b4b; font-size: 21px; font-weight: 700; }

.main { flex: 1; min-width: 0; }
.app-bar {
  display: flex;
  align-items: center;
  justify-content: flex-end;
  gap: 23px;
  height: 86px;
  padding-right: 36px;
}
.deploy {
  padding: 0;
  border: 0;
  background: none;
  color: inherit;
  font: 500 15px/24px "Noto Sans CJK JP", sans-serif;
}
.content { padding: 68px 103px 0 96px; }
h1 { font-size: 47px; line-height: 66px; }
.content h3 { font-size: 29px; line-height: 42px; white-space: nowrap; }
.subtitle { margin-top: 29px; }
.columns {
  display: grid;
  grid-template-columns: 690fr 340fr;
  gap: 20px;
  margin-top: 27px;
}
.animation { width: 100%; height: 404px; }
.notice {
  padding: 28px 20px;
  border: 1px solid #ff4b4b;
  border-radius: 6px;
  background: #25161c;
}
.notice h3 { display: flex; align-items: center; gap: 12px; }
.notice p { margin-top: 17px; font-size: 17px; line-height: 30px; }
.dot { width: 34px; height: 34px; margin-left: 6px; border-radius: 50%; background: #f8312f; }

.settings h3 { margin-bottom: 21px; }
.slider { margin-bottom: 22px; }
.slider label { display: block; font-size: 15px; line-height: 24px; font-weight: 500; }
.value-row { position: relative; height: 24px; }
.value-row output {
  position: absolute;
  left: var(--pos);
  translate: -50% 0;
  color: #ff4b4b;
}
.value-row output, .bounds { font: 16px/24px "Liberation Mono", monospace; }
.bounds { display: flex; justify-content: space-between; margin-top: 6px; }
.slider input {
  display: block;
  appearance: none;
  width: calc(100% + 14px);
  height: 18px;
  margin: 0 -7px;
  background: none;
}
.slider input::-webkit-slider-runnable-track {
  height: 5px;
  background: linear-gradient(90deg, #ff4b4b var(--pos), #31333d var(--pos)) center / calc(100% - 14px) 100% no-repeat;
}
.slider input::-webkit-slider-thumb {
  appearance: none;
  width: 14px;
  height: 15px;
  margin-top: -5px;
  border-radius: 50%;
  background: #ff4b4b;
}

/* Taskbar */
.taskbar {
  display: grid;
  grid-template-columns: 444fr auto 486fr;
  height: 72px;
  border-top: 2px solid #444643;
  background: #222421;
}
.weather { position: relative; padding: 18px 0 0 29px; }
.temp {
  position: absolute;
  left: 42px;
  top: 6px;
  width: 36px;
  height: 24px;
  border-radius: 12px;
  background: #2a2b29;
  font-size: 15px;
  text-align: center;
}
.apps { display: flex; }
.app {
  position: relative;
  display: flex;
  align-items: flex-start;
  justify-content: center;
  width: 60px;
  height: 60px;
  margin: 4px 3px;
  padding: 12px 0 0;
  border: 0;
  border-radius: 6px;
  background: none;
}
.app svg { width: 36px; height: 36px; }
.app .white { color: #fff; }
.app.current { background: #30322f; }
.app::after {
  position: absolute;
  bottom: 1px;
  height: 5px;
  border-radius: 3px;
}
.app.running::after { content: ""; width: 9px; background: #9b9c9a; }
.app.current::after { content: ""; width: 24px; background: #d8a0dc; }
.tray {
  display: flex;
  align-items: center;
  justify-content: flex-end;
  gap: 22px;
  padding: 0 29px 2px 0;
}
.chev { margin-right: 4px; }
.status { display: flex; gap: 10px; }
.clock { display: grid; min-width: 96px; text-align: right; }
```
